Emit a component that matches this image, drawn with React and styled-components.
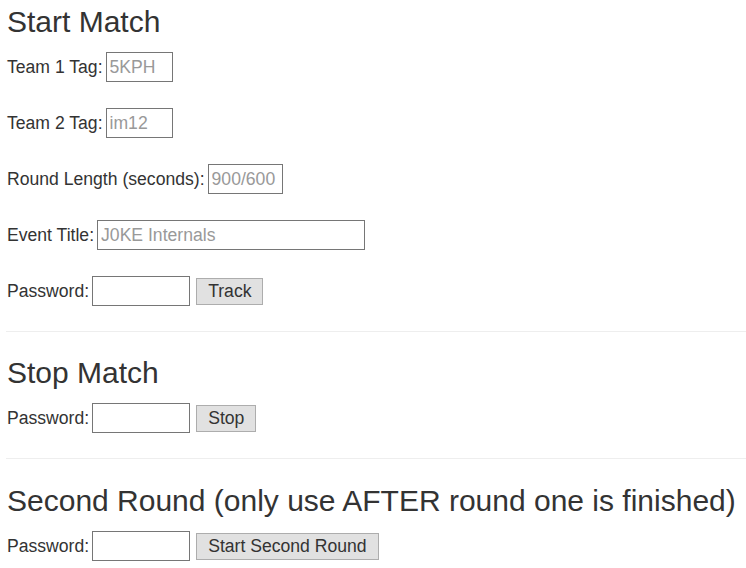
import React from "react"
import styled, { createGlobalStyle } from "styled-components"

const GlobalStyle = createGlobalStyle`
  body {
    margin: 0;
    background: #fff;
    font-family: "Liberation Sans", Arial, sans-serif;
    font-size: 17.6px;
    color: #333;
  }
`

const Page = styled.div`
  padding: 0 0 0 6px;
`

const Section = styled.section`
  display: flex;
  flex-direction: column;
  gap: 26px;
  padding-bottom: 25px;
`

const Heading = styled.h2`
  font-size: 30px;
  font-weight: 400;
  line-height: 33px;
  margin: ${(p) => p.$top}px 0 -12px 1px;
  color: #333;
`

const Row = styled.div`
  display: flex;
  align-items: center;
  height: 30px;
`

const Label = styled.label`
  margin-left: 1px;
  margin-right: 3px;
`

const Input = styled.input`
  box-sizing: border-box;
  width: ${(p) => p.$w}px;
  height: 30px;
  padding: 0 3px;
  border: 1px solid #767676;
  border-radius: 0;
  font-family: "Liberation Sans", Arial, sans-serif;
  font-size: 17.6px;
  color: #333;
  background: #fff;
  &::placeholder {
    color: #999;
  }
`

const Button = styled.button`
  box-sizing: border-box;
  height: 27px;
  margin-left: 6px;
  padding: 0 11px;
  border: 1px solid #adadad;
  border-radius: 0;
  background: #e1e1e1;
  font-family: "Liberation Sans", Arial, sans-serif;
  font-size: 17.6px;
  color: #333;
`

const Rule = styled.hr`
  margin: 0;
  border: 0;
  border-top: 1px solid #eee;
`

function Field({ label, width, placeholder, type = "text" }) {
  return (
    <Row>
      <Label>{label}</Label>
      <Input $w={width} type={type} placeholder={placeholder} />
    </Row>
  )
}

function PasswordRow({ action }) {
  return (
    <Row>
      <Label>Password:</Label>
      <Input $w={98} type="password" />
      <Button>{action}</Button>
    </Row>
  )
}

export default function App() {
  return (
    <Page>
      <GlobalStyle />
      <Section>
        <Heading $top={5}>Start Match</Heading>
        <Field label="Team 1 Tag:" width={67} placeholder="5KPH" />
        <Field label="Team 2 Tag:" width={67} placeholder="im12" />
        <Field label="Round Length (seconds):" width={75} placeholder="900/600" />
        <Field label="Event Title:" width={268} placeholder="J0KE Internals" />
        <PasswordRow action="Track" />
      </Section>
      <Rule />
      <Section>
        <Heading $top={24}>Stop Match</Heading>
        <PasswordRow action="Stop" />
      </Section>
      <Rule />
      <Section>
        <Heading $top={25}>Second Round (only use AFTER round one is finished)</Heading>
        <PasswordRow action="Start Second Round" />
      </Section>
    </Page>
  )
}
